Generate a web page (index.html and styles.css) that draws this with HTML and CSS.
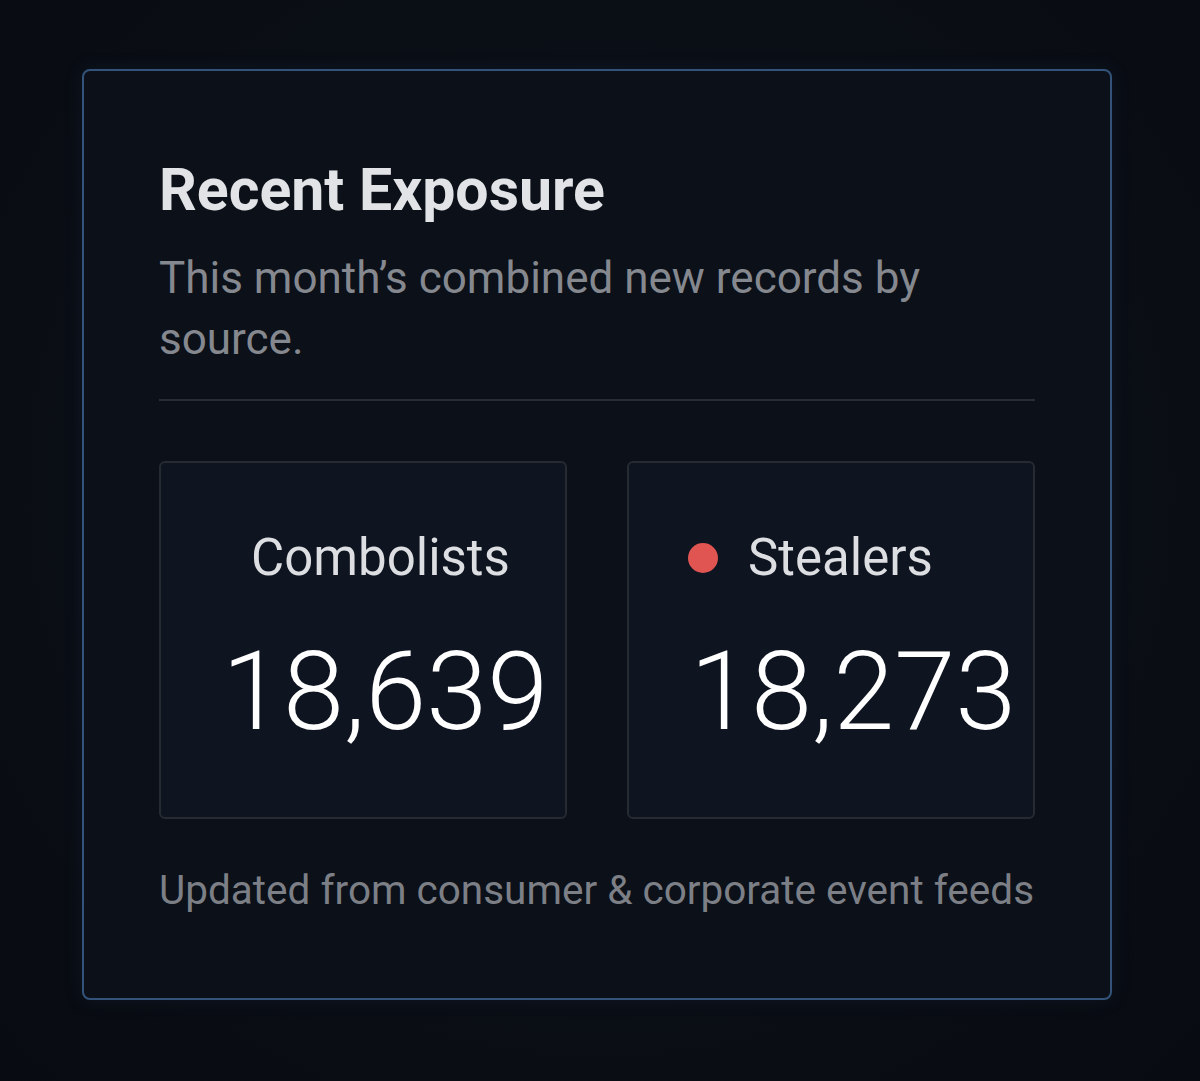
FILE: index.html
```html
<!DOCTYPE html>
<html>
<head>
<meta charset="utf-8">
<link rel="stylesheet" href="styles.css">
</head>
<body>
<div class="page">
  <section class="card">
    <h1 class="title">Recent Exposure</h1>
    <p class="subtitle">This month’s combined new records by source.</p>
    <div class="divider"></div>
    <div class="stats">
      <div class="stat stat-combo">
        <div class="label">Combolists</div>
        <div class="value">18,639</div>
      </div>
      <div class="stat stat-steal">
        <div class="label"><span class="dot"></span>Stealers</div>
        <div class="value">18,273</div>
      </div>
    </div>
    <p class="footer">Updated from consumer &amp; corporate event feeds</p>
  </section>
</div>
</body>
</html>
```

FILE: styles.css
```css
html, body {
  margin: 0;
  padding: 0;
  height: 100%;
}
body {
  background: radial-gradient(ellipse at 50% 45%, #0c111a 0%, #0a0e15 60%, #080b11 100%);
  font-family: Roboto, "Noto Sans", "Liberation Sans", sans-serif;
  color: #e4e6ea;
}
.page {
  padding: 69px 0 0 82px;
}
.card {
  box-sizing: border-box;
  width: 1030px;
  height: 931px;
  border: 2px solid #33537a;
  border-radius: 8px;
  background: #0b1019;
  box-shadow: 0 0 18px rgba(30, 60, 100, 0.2);
  padding: 87px 75px 0 75px;
}
.title {
  margin: 0;
  font-size: 59px;
  line-height: 64px;
  font-weight: 700;
  color: #e2e3e6;
}
.subtitle {
  margin: 26px 0 0 0;
  font-size: 44px;
  line-height: 61px;
  color: #85888e;
}
.divider {
  height: 2px;
  background: #2a2d33;
  margin-top: 29px;
}
.stats {
  display: grid;
  grid-template-columns: 1fr 1fr;
  gap: 60px;
  margin-top: 60px;
}
.stat {
  box-sizing: border-box;
  height: 358px;
  border: 2px solid #262a31;
  border-radius: 6px;
  background: #0e1420;
  padding-top: 67px;
}
.label {
  display: flex;
  align-items: center;
  font-size: 51px;
  line-height: 56px;
  color: #dcdee2;
}
.stat-combo .label { padding-left: 90px; }
.stat-steal .label { padding-left: 59px; }
.dot {
  width: 30px;
  height: 30px;
  border-radius: 50%;
  background: #e05552;
  margin-right: 30px;
}
.value {
  font-size: 110px;
  font-weight: 300;
  line-height: 120px;
  color: #ffffff;
  margin-top: 46px;
  padding-left: 61px;
}
.footer {
  margin: 47px 0 0 0;
  font-size: 40.5px;
  line-height: 48px;
  color: #7c7f85;
}
```
